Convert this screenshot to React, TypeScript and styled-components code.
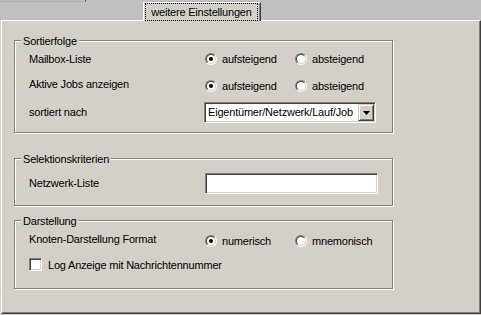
import React from "react";
import styled, { createGlobalStyle } from "styled-components";

const Global = createGlobalStyle`
  html, body { margin: 0; padding: 0; background: #d4d0c8; }
  #root { width: 481px; height: 315px; overflow: hidden; }
`;

const Window = styled.div`
  width: 481px;
  height: 315px;
  background: #d4d0c8;
  display: flex;
  flex-direction: column;
  font-family: "Liberation Sans", Arial, sans-serif;
  font-size: 11px;
  line-height: 13px;
  letter-spacing: -0.2px;
  color: #000;
`;

const TabStrip = styled.div`
  height: 20px;
  flex: none;
  background: #c0c0c0;
  display: flex;
  align-items: flex-end;
`;

const RowEdge = styled.div`
  align-self: flex-start;
  box-sizing: border-box;
  width: 86px;
  height: 2px;
  margin-right: 57px;
  border-bottom: 1px solid #b0b0b0;
  border-right: 1px solid #505050;
`;

const Tab = styled.div`
  position: relative;
  z-index: 1;
  box-sizing: border-box;
  width: 118px;
  height: 19px;
  margin-bottom: -1px;
  background: #d4d0c8;
  border-top: 1px solid #fff;
  border-left: 1px solid #fff;
  border-right: 1px solid #404040;
  box-shadow: inset -1px 0 0 #808080;
  padding-left: 1px;
  display: flex;
`;

const FocusRect = styled.div`
  box-sizing: border-box;
  width: 113px;
  height: 18px;
  border: 1px dotted #000;
  display: flex;
  align-items: center;
  justify-content: center;
  white-space: nowrap;
`;

const Panel = styled.div`
  box-sizing: border-box;
  margin-left: 1px;
  width: 480px;
  height: 294px;
  flex: none;
  background: #d4d0c8;
  border-top: 1px solid #fff;
  border-left: 1px solid #fff;
  border-right: 1px solid #404040;
  border-bottom: 1px solid #404040;
  box-shadow: inset -1px -1px 0 #808080;
  padding: 19px 0 0 12px;
  display: flex;
  flex-direction: column;
`;

const Group = styled.div<{ $mt?: number; $pb: number }>`
  box-sizing: border-box;
  width: 379px;
  margin-top: ${(p) => p.$mt ?? 0}px;
  padding-bottom: ${(p) => p.$pb}px;
  border: 1px solid #808080;
  box-shadow: 1px 1px 0 #fff, inset 1px 1px 0 #fff;
  display: flex;
  flex-direction: column;
`;

const GroupTitle = styled.div`
  align-self: flex-start;
  margin: -6px 0 0 6px;
  padding: 0 2px;
  height: 13px;
  background: #d4d0c8;
  white-space: nowrap;
`;

const Row = styled.div<{ $mt?: number; $h: number }>`
  display: flex;
  align-items: flex-start;
  height: ${(p) => p.$h}px;
  margin-top: ${(p) => p.$mt ?? 0}px;
  padding-left: 14px;
`;

const Label = styled.div<{ $dy?: number }>`
  width: 175px;
  flex: none;
  margin-top: ${(p) => p.$dy ?? 0}px;
  white-space: nowrap;
`;

const Options = styled.div<{ $dy?: number }>`
  display: flex;
  margin-top: ${(p) => p.$dy ?? 0}px;
  padding-left: 1px;
`;

const Option = styled.div`
  width: 90px;
  display: flex;
  align-items: flex-start;
  gap: 5px;
  white-space: nowrap;
`;

const RadioOuter = styled.span`
  box-sizing: border-box;
  width: 12px;
  height: 12px;
  flex: none;
  border-radius: 50%;
  border: 1px solid;
  border-color: #808080 #fff #fff #808080;
  display: flex;
`;

const RadioInner = styled.span<{ $on?: boolean }>`
  box-sizing: border-box;
  width: 10px;
  height: 10px;
  border-radius: 50%;
  border: 1px solid;
  border-color: #404040 #d4d0c8 #d4d0c8 #404040;
  background: #fff;
  display: flex;
  align-items: center;
  justify-content: center;
  &::after {
    content: "";
    width: 4px;
    height: 4px;
    border-radius: 50%;
    background: ${(p) => (p.$on ? "#000" : "transparent")};
  }
`;

const Sunken = styled.div<{ $w: number; $ml?: number }>`
  box-sizing: border-box;
  width: ${(p) => p.$w}px;
  height: 21px;
  margin-left: ${(p) => p.$ml ?? 0}px;
  background: #fff;
  border: 1px solid;
  border-color: #808080 #fff #fff #808080;
  box-shadow: inset 1px 1px 0 #404040, inset -1px -1px 0 #d4d0c8;
  padding: 1px;
  display: flex;
`;

const ComboText = styled.div`
  flex: 1;
  overflow: hidden;
  white-space: nowrap;
  padding: 2px 0 0 2px;
`;

const DropButton = styled.div`
  box-sizing: border-box;
  width: 16px;
  height: 17px;
  flex: none;
  background: #d4d0c8;
  border: 1px solid;
  border-color: #d4d0c8 #404040 #404040 #d4d0c8;
  box-shadow: inset 1px 1px 0 #fff, inset -1px -1px 0 #808080;
  display: flex;
  align-items: center;
  justify-content: center;
`;

const CheckBox = styled.span`
  box-sizing: border-box;
  width: 13px;
  height: 13px;
  flex: none;
  background: #fff;
  border: 1px solid;
  border-color: #808080 #fff #fff #808080;
  box-shadow: inset 1px 1px 0 #404040, inset -1px -1px 0 #d4d0c8;
`;

const CheckLabel = styled.div`
  display: flex;
  align-items: flex-start;
  gap: 6px;
  white-space: nowrap;
`;

const CheckText = styled.span`
  margin-top: 1px;
`;

function Radio({ on, label }: { on?: boolean; label: string }) {
  return (
    <Option>
      <RadioOuter>
        <RadioInner $on={on} />
      </RadioOuter>
      <span>{label}</span>
    </Option>
  );
}

export default function App() {
  return (
    <>
      <Global />
      <Window>
        <TabStrip>
          <RowEdge />
          <Tab>
            <FocusRect>weitere Einstellungen</FocusRect>
          </Tab>
        </TabStrip>
        <Panel>
          <Group $pb={9}>
            <GroupTitle>Sortierfolge</GroupTitle>
            <Row $mt={5} $h={25}>
              <Label>Mailbox-Liste</Label>
              <Options>
                <Radio on label="aufsteigend" />
                <Radio label="absteigend" />
              </Options>
            </Row>
            <Row $h={24}>
              <Label>Aktive Jobs anzeigen</Label>
              <Options $dy={2}>
                <Radio on label="aufsteigend" />
                <Radio label="absteigend" />
              </Options>
            </Row>
            <Row $h={21}>
              <Label $dy={4}>sortiert nach</Label>
              <Sunken $w={172}>
                <ComboText>Eigentümer/Netzwerk/Lauf/Job</ComboText>
                <DropButton>
                  <svg width="7" height="4" viewBox="0 0 7 4">
                    <path d="M0 0h7L3.5 4z" fill="#000" />
                  </svg>
                </DropButton>
              </Sunken>
            </Row>
          </Group>

          <Group $mt={25} $pb={11}>
            <GroupTitle>Selektionskriterien</GroupTitle>
            <Row $mt={7} $h={21}>
              <Label $dy={4}>Netzwerk-Liste</Label>
              <Sunken $w={173} $ml={1} />
            </Row>
          </Group>

          <Group $mt={14} $pb={17}>
            <GroupTitle>Darstellung</GroupTitle>
            <Row $mt={5} $h={25}>
              <Label>Knoten-Darstellung Format</Label>
              <Options $dy={2}>
                <Radio on label="numerisch" />
                <Radio label="mnemonisch" />
              </Options>
            </Row>
            <Row $h={13}>
              <CheckLabel>
                <CheckBox />
                <CheckText>Log Anzeige mit Nachrichtennummer</CheckText>
              </CheckLabel>
            </Row>
          </Group>
        </Panel>
      </Window>
    </>
  );
}
